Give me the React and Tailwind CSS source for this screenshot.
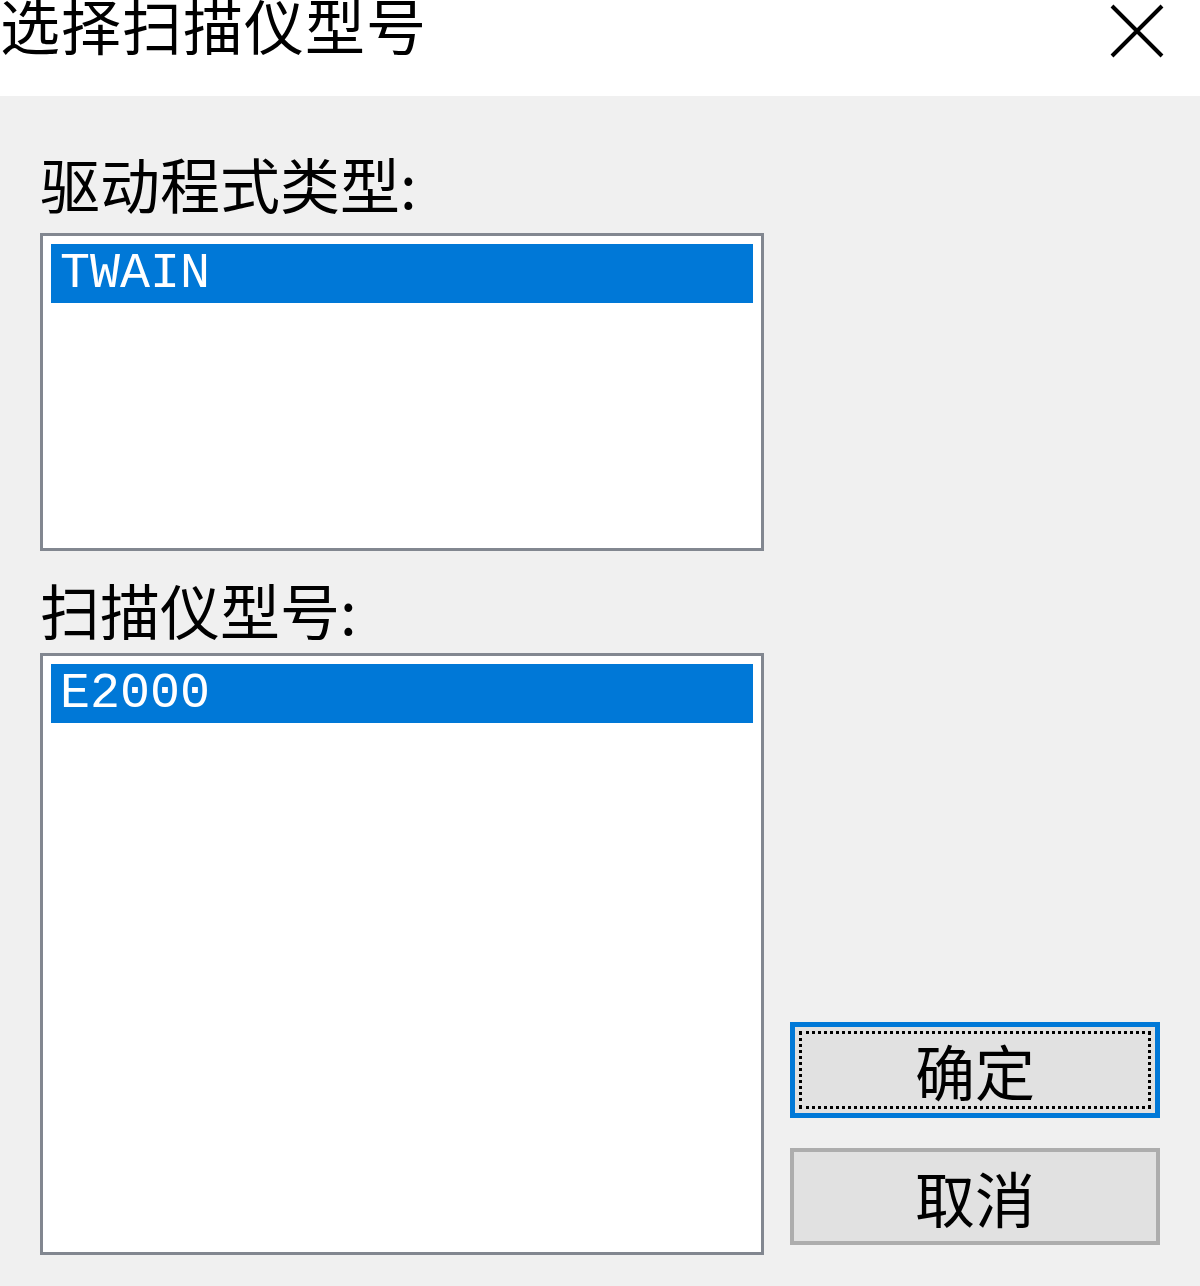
import React from 'react';

const cjk = { fontFamily: '"Noto Sans CJK SC", "Noto Sans", sans-serif' };
const mono = { fontFamily: '"Liberation Mono", "DejaVu Sans Mono", monospace' };

function ListBox({ item, height }) {
    return (
        <div className={`w-[724px] ${height} bg-white border-[3px] border-[#828790] p-[8px]`}>
            <div className="h-[59px] bg-[#0078d7] text-white flex items-center pl-[9px]">
                <span className="text-[50px] leading-none" style={mono}>{item}</span>
            </div>
        </div>
    );
}

export default function App() {
    return (
        <div className="w-[1200px] h-[1286px] flex flex-col bg-[#f0f0f0] text-black" style={cjk}>
            <header className="h-[96px] bg-white flex justify-between items-start overflow-hidden">
                <div className="text-[60px] leading-[60px] -mt-[6px] tracking-[1px]">选择扫描仪型号</div>
                <svg className="mt-[4px] mr-[36px]" width="54" height="54" viewBox="0 0 54 54">
                    <path d="M2 2 L52 52 M52 2 L2 52" stroke="#000" strokeWidth="4" fill="none" />
                </svg>
            </header>

            <main className="flex-1 flex pl-[40px]">
                <div className="flex flex-col">
                    <div className="h-[137px] flex items-end pb-[18px] text-[60px] leading-[64px]">驱动程式类型:</div>
                    <ListBox item="TWAIN" height="h-[318px]" />
                    <div className="h-[102px] flex items-end pb-[12px] text-[60px] leading-[64px]">扫描仪型号:</div>
                    <ListBox item="E2000" height="h-[602px]" />
                </div>

                <div className="flex flex-col justify-end gap-[30px] ml-[26px] pb-[41px]">
                    <button className="w-[370px] h-[96px] bg-[#e1e1e1] border-[5px] border-[#0078d7] p-[4px]">
                        <div className="w-full h-full border-[3px] border-dotted border-black flex items-center justify-center text-[60px] leading-none" style={cjk}>
                            确定
                        </div>
                    </button>
                    <button className="w-[370px] h-[97px] bg-[#e1e1e1] border-[4px] border-[#adadad] flex items-center justify-center text-[60px] leading-none" style={cjk}>
                        取消
                    </button>
                </div>
            </main>
        </div>
    );
}
